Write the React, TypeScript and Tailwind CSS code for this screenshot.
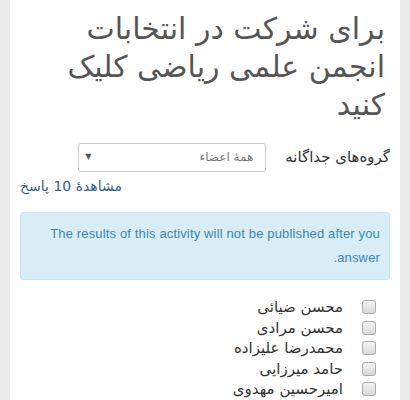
import React from "react";

const names = ["محسن ضیائی", "محسن مرادی", "محمدرضا علیزاده", "حامد میرزایی", "امیرحسین مهدوی"];

export default function App() {
  return (
    <div
      dir="rtl"
      className="min-h-[400px] bg-[#ebebeb] px-[10px] text-[#333]"
      style={{ fontFamily: '"DejaVu Sans", "Noto Sans", sans-serif' }}
    >
      <div className="min-h-[400px] bg-white pt-[10px]">
        <h2 className="pr-[15px] text-[30px] leading-[38px] font-normal text-[#555]">
          برای شرکت در انتخابات انجمن علمی ریاضی کلیک کنید
        </h2>

        <div className="mt-[18px] flex h-[30px] items-center gap-[19px] pr-[10px]">
          <span className="text-[15px] text-[#333]">گروه‌های جداگانه</span>
          <div className="flex h-[29px] w-[188px] items-center justify-between rounded-[3px] border border-[#ccc] bg-white pr-[12px] pl-[6px]">
            <span className="text-[12px] text-[#777]">همهٔ اعضاء</span>
            <span className="text-[8px] text-[#555]">▼</span>
          </div>
        </div>

        <div className="mt-[5px] flex justify-end pl-[10px]">
          <a className="text-[14px] leading-[18px] text-[#2f5f95]">مشاهدهٔ 10 پاسخ</a>
        </div>

        <div
          className="mx-[10px] mt-[17px] rounded-[3px] border border-[#bce8f1] bg-[#d9edf7] px-[9px] py-[9px] text-[13px] leading-[24px] tracking-[0.15px] text-[#3a87ad]"
          style={{ fontFamily: '"Liberation Sans", Arial, sans-serif' }}
        >
          The results of this activity will not be published after you answer.
        </div>

        <ul className="mt-[17px] flex flex-col pr-[24px]">
          {names.map((n) => (
            <li key={n} className="flex h-[20.5px] items-center gap-[19px]">
              <span className="h-[14px] w-[14px] shrink-0 rounded-[3px] border border-[#aaa] bg-gradient-to-b from-[#f4f4f4] to-[#d8d8d8]" />
              <span className="text-[15px] leading-[20px] text-[#333]">{n}</span>
            </li>
          ))}
        </ul>
      </div>
    </div>
  );
}
